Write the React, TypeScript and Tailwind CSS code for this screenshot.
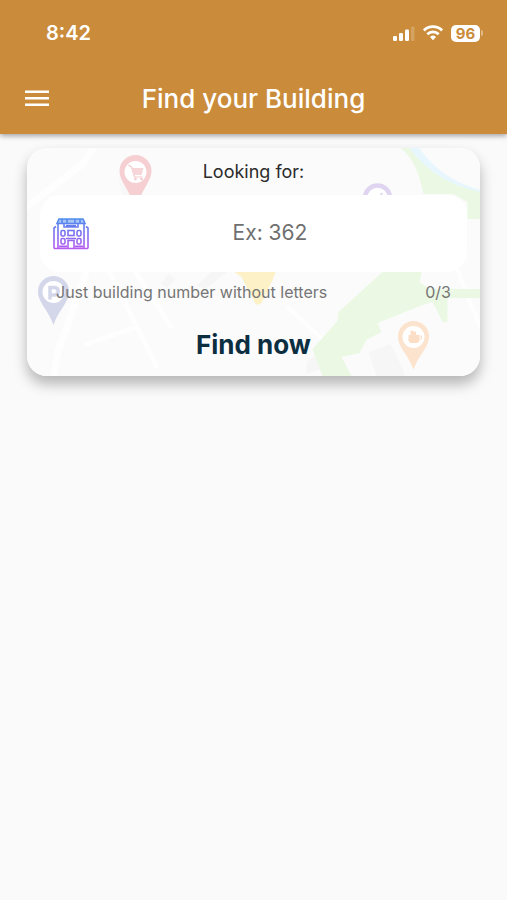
import React, { useState } from 'react';

const StatusIcons: React.FC = () => (
    <div className="flex items-center gap-2" aria-hidden="true">
        <svg width="23" height="16" viewBox="0 0 23 16" fill="white">
            <rect x="1" y="11" width="4" height="5" rx="1.2" />
            <rect x="7" y="8" width="4" height="8" rx="1.2" />
            <rect x="13" y="4.5" width="4" height="11.5" rx="1.2" />
            <rect x="19" y="1.5" width="3.5" height="14.5" rx="1.2" opacity="0.2" />
        </svg>
        <svg width="20" height="16" viewBox="0 0 20 16" fill="none" stroke="white" strokeWidth="2.8">
            <path d="M0.9 5.4a13 13 0 0 1 18.2 0" />
            <path d="M4.3 9.2a8.2 8.2 0 0 1 11.4 0" />
            <path d="M7 11.9a4.3 4.3 0 0 1 6 0L10 15.2z" fill="white" stroke="none" />
        </svg>
        <div className="flex items-center gap-px">
            <span className="flex h-[17px] w-[29px] items-center justify-center rounded-[5px] bg-white text-[15px] leading-none font-bold text-[#ca8c3b]">
                96
            </span>
            <span className="h-[6px] w-[2px] rounded-r-full bg-white/40" />
        </div>
    </div>
);

const BuildingIcon: React.FC = () => (
    <svg width="36" height="34" viewBox="0 0 36 34" fill="none" stroke="url(#building-stroke)" strokeWidth="1.6" className="shrink-0" aria-hidden="true">
        <defs>
            <linearGradient id="building-stroke" gradientUnits="userSpaceOnUse" x1="18" y1="2" x2="18" y2="32">
                <stop offset="0" stopColor="#4f8bee" />
                <stop offset="0.5" stopColor="#7f70f0" />
                <stop offset="1" stopColor="#b85af0" />
            </linearGradient>
        </defs>
        <path d="M6 2h24l2 4.500H4z" fill="#4f8bee" fillOpacity="0.5" />
        <path d="M9 2v4.500M14 2v4.500M22 2v4.500M27 2v4.500" />
        <path d="M5 6.500v25M31 6.500v25M1 31.500h34M1 31.500V11l2-1.500M35 31.500V11l-2-1.500" />
        <path d="M11 7v3h14V7M13 8.500h10" />
        <rect x="8" y="13.500" width="4" height="5.500" rx="1.5" />
        <rect x="15" y="13.500" width="6" height="5" />
        <rect x="24" y="13.500" width="4" height="5.500" rx="1.5" />
        <rect x="8" y="21.500" width="4" height="5.500" rx="1.5" />
        <rect x="24" y="21.500" width="4" height="5.500" rx="1.5" />
        <path d="M15 31.500v-8h6v8M13 21.500h10" />
        <path d="M6 29.500h8M22 29.500h8" strokeWidth="2" />
    </svg>
);

const MapPattern: React.FC = () => (
    <svg
        className="absolute inset-0 h-full w-full"
        viewBox="0 0 454 228"
        preserveAspectRatio="xMidYMid slice"
        aria-hidden="true"
    >
        <rect width="454" height="228" fill="#fbfbfb" />

        {/* roads */}
        <g fill="none" stroke="#fefefe" strokeWidth="7" strokeLinecap="round">
            <path d="M-4 62L56 16 70-4" />
            <path d="M28 228c0-30 14-46 18-66l14-40" />
            <path d="M80 118l50 100M108 122l36 56" strokeWidth="5" />
            <path d="M60 196l50-17" strokeWidth="5" />
            <path d="M262 160l48 44" strokeWidth="4" />
            <path d="M430 120l24 60" strokeWidth="4" />
        </g>

        {/* blocks */}
        <g fill="#f6f6f6">
            <path d="M134 136l8-10 7 5-8 9z" />
            <path d="M170 138l16-15 14 1-20 17z" />
            <path d="M280 214l18-14 12 4-12 16-18 6z" />
            <path d="M342 204l22-8 12 24 2 8h-28z" />
            <path d="M92 28l6-14 4 36h-6z" opacity="0.7" />
        </g>

        {/* park and river in the corner */}
        <path d="M374 0c13 10 18 24 23 46h30l14 8v17h13V42C425 38 408 26 384 0z" fill="#ebf8e3" />
        <path d="M383 0c16 22 38 37 71 44v-3C426 33 412 22 393 0z" fill="#e8f7fd" />
        <path d="M393 0c14 20 32 34 61 42V0z" fill="#fbfbfb" />

        <path
            d="M356 124h39l-2 10 10 7h51v9h-33v24h-5l-10-20-15 5-40 16 4 9-15 8-7 13-18 4 10 19h-29l-10-27 25-28 1-9z"
            fill="#ebf8e3"
        />

        <path d="M205 118v4l10 7 14 27q3 2 6-1l11-23 4-10v-4z" fill="#fdf1c8" />

        {/* cart pin */}
        <path d="M109 7a16 16 0 0 1 16 16c0 9-8 17-11 26h-10c-3-9-11-17-11-26A16 16 0 0 1 109 7z" fill="#f5cfd1" />
        <circle cx="109" cy="24" r="11" fill="white" />
        <path d="M102 17l3 2 3 10h8" fill="none" stroke="#f3cacd" strokeWidth="1.2" />
        <path d="M105 20h12l-2 7h-8z" fill="#f6d6d8" />
        <circle cx="109" cy="31" r="1.3" fill="#f3cacd" />
        <circle cx="115" cy="31" r="1.3" fill="#f3cacd" />

        {/* purple pin, mostly under the field */}
        <circle cx="351" cy="50" r="12.500" fill="white" stroke="#e0d5f1" strokeWidth="4.500" />
        <circle cx="355" cy="46" r="1.500" fill="#e6dcf3" />

        {/* parking pin */}
        <path d="M27 128a15.500 15.500 0 0 1 15.500 15.500c0 11-10 18-15.500 33.500-5.500-15.500-15.500-22.500-15.500-33.500A15.500 15.500 0 0 1 27 128z" fill="#d4d7ea" />
        <circle cx="27" cy="144" r="11" fill="white" />
        <path d="M23.500 151.500v-12h5a3.800 3.800 0 0 1 0 7.500h-5" fill="none" stroke="#d4d7ea" strokeWidth="3.500" />

        {/* food pin */}
        <path d="M387 173a15.500 15.500 0 0 1 15.500 15.500c0 11-10 18-15.500 33-5.500-15-15.500-22-15.500-33A15.500 15.500 0 0 1 387 173z" fill="#fce3cd" />
        <circle cx="387" cy="189" r="11" fill="white" />
        <path d="M382 187h11v6l-2 2h-7l-2-2zM384 187v-4l2-1 1 2 2-1 1 4z" fill="#fbdec5" />
        <path d="M393 188h2v3h-2" fill="none" stroke="#fbdec5" />
    </svg>
);

export default function App() {
    const [building, setBuilding] = useState('');

    return (
        <div className="min-h-screen bg-[#fafafa] font-['Inter',sans-serif]">
            <header className="relative bg-[#ca8c3b] text-white shadow-[0_2px_5px_rgba(0,0,0,0.35)]">
                <div className="flex h-16 items-center justify-between pt-0.5 pr-6 pl-[46px]">
                    <span className="text-[20px] font-semibold">8:42</span>
                    <StatusIcons />
                </div>
                <div className="grid h-[70px] grid-cols-[48px_1fr_48px] items-center px-[13px] pb-0.5">
                    <button type="button" aria-label="Open menu" className="flex h-12 items-center justify-center">
                        <svg width="24" height="18" viewBox="0 0 24 18" fill="white">
                            <path d="M0 1.500h24v2.500H0zM0 8h24v2.500H0zM0 14.500h24v2.500H0z" />
                        </svg>
                    </button>
                    <h1 className="text-center text-[26px] font-medium">Find your Building</h1>
                </div>
            </header>

            <main className="px-[27px] pt-3.5">
                <form
                    className="relative overflow-hidden rounded-[20px] shadow-[0_8px_14px_rgba(0,0,0,0.28)]"
                    onSubmit={(e) => e.preventDefault()}
                >
                    <MapPattern />
                    <div className="relative px-[13px]">
                        <label htmlFor="building" className="flex h-[47px] items-center justify-center text-[18px] text-[#2b2b2b]">
                            Looking for:
                        </label>
                        <div className="flex h-[77px] items-center rounded-[20px] bg-white pr-4 pl-[13px]">
                            <BuildingIcon />
                            <input
                                id="building"
                                inputMode="numeric"
                                maxLength={3}
                                value={building}
                                placeholder="Ex: 362"
                                aria-describedby="building-hint"
                                onChange={(e) => setBuilding(e.target.value)}
                                className="h-full w-full min-w-0 bg-transparent pb-0.5 text-center text-[21px] text-[#2b2b2b] outline-none placeholder:text-[#6f6f6f]"
                            />
                        </div>
                        <div className="flex h-[39px] items-center justify-between px-4 text-[16px] text-[#757575]">
                            <span id="building-hint">Just building number without letters</span>
                            <span>{building.length}/3</span>
                        </div>
                        <button type="submit" className="flex h-[65px] w-full items-center justify-center pt-0.5 text-[26px] font-bold text-[#0b2e41]">
                            Find now
                        </button>
                    </div>
                </form>
            </main>
        </div>
    );
}
